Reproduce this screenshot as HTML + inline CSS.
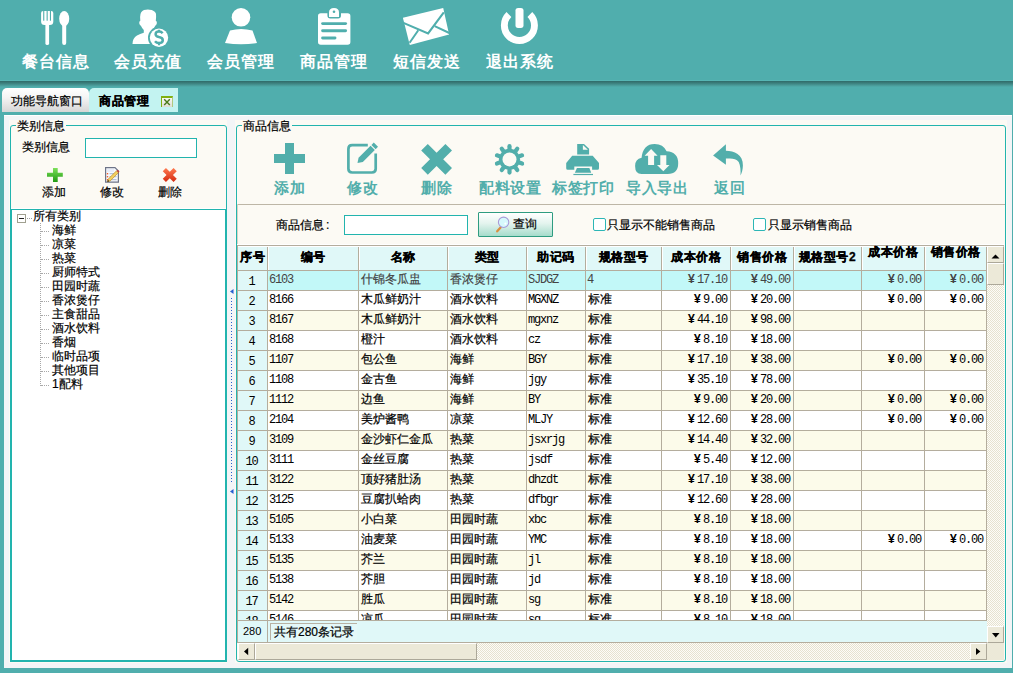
<!DOCTYPE html><html><head><meta charset="utf-8"><style>
*{margin:0;padding:0;box-sizing:border-box}
html,body{width:1013px;height:673px;overflow:hidden}
body{position:relative;background:#50aead;font-family:"Liberation Sans",sans-serif;font-size:12px;color:#000}
.a{position:absolute}
.t,.cell{-webkit-text-stroke:0.2px currentColor}
.nav,.tb,.mono,.num{-webkit-text-stroke:0}
.hd{-webkit-text-stroke:0.3px #000;z-index:2}
.t{position:absolute;white-space:nowrap;line-height:1}
.nav{color:#fff;font-size:16px;font-weight:bold;letter-spacing:1px}
.tb{color:#52aeab;font-size:15px;font-weight:bold;letter-spacing:0.6px}
.cell{position:absolute;white-space:nowrap;overflow:hidden;line-height:19px;height:19px}
.num{font-family:"Liberation Mono",monospace;font-size:12px;letter-spacing:-1.2px}
.mono{font-family:"Liberation Mono",monospace;font-size:12px;letter-spacing:-1.2px}
.yen{font-weight:bold;margin-right:2px;letter-spacing:0}
.hd{font-weight:bold;text-align:center;letter-spacing:0.5px}
.sbtn{position:absolute;background:#ece9d8;border-top:1px solid #fff;border-left:1px solid #fff;border-right:1px solid #aca899;border-bottom:1px solid #aca899}
.check{background-color:#fdfcf8;background-image:linear-gradient(45deg,#e6e2d0 25%,transparent 25%,transparent 75%,#e6e2d0 75%),linear-gradient(45deg,#e6e2d0 25%,transparent 25%,transparent 75%,#e6e2d0 75%);background-size:2px 2px;background-position:0 0,1px 1px}
</style></head><body>

<div class="a" style="left:0;top:80px;width:1013px;height:1px;background:#56b6b4"></div>
<div class="a" style="left:0;top:81px;width:1013px;height:6px;background:linear-gradient(#2f6a68,#3b7e7c 35%,#4a9c9a 75%,#50aead)"></div>
<div class="t nav" style="left:22px;top:54px">餐台信息</div>
<div class="t nav" style="left:114px;top:54px">会员充值</div>
<div class="t nav" style="left:207px;top:54px">会员管理</div>
<div class="t nav" style="left:300px;top:54px">商品管理</div>
<div class="t nav" style="left:393px;top:54px">短信发送</div>
<div class="t nav" style="left:486px;top:54px">退出系统</div>
<svg class="a" style="left:0;top:0" width="600" height="80">
<g fill="#fff">
 <path d="M41.1 13 q0 -2.1 2.1 -2.1 h8 q2.1 0 2.1 2.1 v8.5 q0 3.5 -3.5 3.5 h-5.2 q-3.5 0 -3.5 -3.5z"/>
 <rect x="45.4" y="23" width="3.7" height="22" rx="1.85"/>
 <ellipse cx="64.2" cy="18.7" rx="5" ry="7.6"/>
 <rect x="62.2" y="22" width="4" height="23" rx="2"/>
 <path d="M140.5 14 q1 -4 5.5 -4.2 q2 -0.5 3.5 0 q5 0.3 6.5 4 q0.3 3 -0.2 7 q1.5 0.5 1 2.8 q-0.5 2 -1.6 2.2 q-0.8 2.2 -2.8 4.2 v1.8 q2.2 0.8 4.5 1.8 l-3.8 10.3 h-20.6 q0 -6 4.5 -8.5 q3 -1.5 6.8 -2.6 v-2.8 q-2 -2 -2.9 -4.2 q-1.1 -0.2 -1.6 -2.2 q-0.5 -2.3 1 -2.8 q-0.5 -4 0.2 -6.8z"/>
 <circle cx="159" cy="37.7" r="11" fill="#50aead"/>
 <circle cx="159" cy="37.7" r="9.2"/>
</g>
<g fill="#50aead"><rect x="43.2" y="10" width="1.1" height="10.7"/><rect x="46.6" y="10" width="1.1" height="10.7"/><rect x="49.9" y="10" width="1.1" height="10.7"/></g>
<path d="M162.6 33.2 q-1.2 -1.6 -3.6 -1.6 q-3.4 0 -3.4 2.6 q0 2 3.4 2.8 q3.8 0.8 3.8 3.2 q0 2.8 -3.8 2.8 q-2.6 0 -4 -1.8" fill="none" stroke="#50aead" stroke-width="2.5"/>
<path d="M159 29.8 v2 M159 42.8 v2.4" stroke="#50aead" stroke-width="2.2"/>
<g fill="#fff">
 <circle cx="241" cy="17.3" r="9.3"/>
 <path d="M230 30.5 q11 -3 22.5 0 l4.5 12.5 q-16 2.5 -32 0z"/>
 <path d="M318 16 q0 -2.8 2.8 -2.8 h6.6 v2 q0 3.2 3 3.2 h7.6 q3 0 3 -3.2 v-2 h6.6 q2.8 0 2.8 2.8 v26 q0 2.8 -2.8 2.8 h-26.8 q-2.8 0 -2.8 -2.8z"/>
 <path d="M329 17.1 v-4.6 q0 -4.6 5 -4.6 q5 0 5 4.6 v4.6z"/>
</g>
<circle cx="334" cy="11.8" r="1.3" fill="#50aead"/>
<g stroke="#50aead" stroke-width="2.9" stroke-linecap="round">
 <path d="M322.6 23.6 h23"/><path d="M322.6 30.8 h23"/><path d="M322.6 38 h12.4"/>
</g>
<path d="M402.9 17.7 L443.2 7.9 L449.1 34.4 L409.8 44.9z" fill="#fff"/>
<path d="M403.4 22.9 L428.1 33.4 L443.8 12.4" fill="none" stroke="#50aead" stroke-width="2.1"/>
<path d="M409.6 42.8 L418.3 30.2 M434.7 26.2 L449.3 33" fill="none" stroke="#50aead" stroke-width="2"/>
<path d="M508.95 14.57 A15.05 15.05 0 1 0 529.85 14.57" fill="none" stroke="#fff" stroke-width="6.9"/>
<rect x="515.5" y="7.9" width="8" height="20" rx="2.6" fill="#fff"/>
</svg>
<div class="a" style="left:2px;top:88px;width:87px;height:24px;border-radius:5px 5px 0 0;background:linear-gradient(#ffffff,#f4f4f4 40%,#d6d6d6)"></div>
<div class="t" style="left:11px;top:95px;font-size:12px">功能导航窗口</div>
<div class="a" style="left:89px;top:88px;width:89px;height:24px;border-radius:5px 0 0 0;background:#c3f3f1"></div>
<div class="t" style="left:99px;top:95px;font-size:12px;font-weight:bold;letter-spacing:0.7px">商品管理</div>
<div class="a" style="left:161px;top:96px;width:12px;height:11px;border-top:2px solid #80b010;border-left:1px solid #80b010;border-right:1px solid #b0c880;background:linear-gradient(#f8f8f4,#dcdcd4)"></div>
<svg class="a" style="left:161px;top:96px" width="12" height="11"><path d="M3.2 3.2 L8.8 9 M8.8 3.2 L3.2 9" stroke="#4a7a1a" stroke-width="1.4"/></svg>
<div class="a" style="left:4px;top:115px;width:1008px;height:553px;background:#f3f5f7;border-top:1px solid #fff"></div>
<div class="a" style="left:9px;top:120px;width:218px;height:543px;background:#fcfaf4"></div>
<div class="a" style="left:10px;top:125px;width:217px;height:537px;border:1px solid #22b4ae;border-radius:3px"></div>
<div class="t" style="left:16px;top:120px;background:#fcfaf4;padding:0 1px">类别信息</div>
<div class="t" style="left:22px;top:141px">类别信息</div>
<div class="a" style="left:85px;top:138px;width:112px;height:20px;background:#fff;border:1px solid #22b4ae"></div>
<svg class="a" style="left:40px;top:164px" width="150" height="22">
<defs><linearGradient id="gp" x1="0" y1="0" x2="0" y2="1"><stop offset="0" stop-color="#7ee05a"/><stop offset="1" stop-color="#1f9a12"/></linearGradient>
<linearGradient id="rx" x1="0" y1="0" x2="0" y2="1"><stop offset="0" stop-color="#ff7a50"/><stop offset="1" stop-color="#d42a10"/></linearGradient></defs>
<path d="M13 4 h4.7 v4.7 h5.1 v4.1 h-5.1 v5.2 h-4.7 v-5.2 h-6 v-4.1 h6z" fill="url(#gp)"/>
<path d="M65.6 3.6 h9.4 l3.4 3.4 v11.2 h-12.8z" fill="#f6f8fc" stroke="#6e7488" stroke-width="1.2"/>
<rect x="67" y="5" width="7" height="3" fill="#e8ecf8"/>
<g fill="#f06030"><rect x="66.8" y="9" width="1.4" height="1.4"/><rect x="66.8" y="12" width="1.4" height="1.4"/><rect x="66.8" y="15" width="1.4" height="1.4"/></g>
<path d="M69.5 9.7 h6 M69.5 12.7 h7 M69.5 15.7 h7" stroke="#a8b6d0" stroke-width="1"/>
<path d="M67.4 17.8 L68.3 15 L76.5 6.8 L78.4 8.7 L70.2 16.9z" fill="#f4d060" stroke="#b08020" stroke-width="0.6"/>
<path d="M76.5 6.8 L77.6 5.7 L79.5 7.6 L78.4 8.7z" fill="#c04040"/>
<path d="M67.4 17.8 L68 16 L69.2 17.2z" fill="#000"/>
<path d="M122.75 7.2 L125.95 4 L129.75 7.8 L133.55 4 L136.75 7.2 L132.95 11 L136.75 14.8 L133.55 18 L129.75 14.2 L125.95 18 L122.75 14.8 L126.55 11z" fill="url(#rx)"/>
</svg>
<div class="t" style="left:42px;top:186px">添加</div>
<div class="t" style="left:100px;top:186px">修改</div>
<div class="t" style="left:158px;top:186px">删除</div>
<div class="a" style="left:10px;top:208px;width:217px;height:454px;background:#fff;border:1px solid #22b4ae;border-top:none"></div>
<div class="a" style="left:11px;top:209px;width:215px;height:452px;border:1px solid #22b4ae"></div>
<div class="a" style="left:17px;top:214px;width:9px;height:9px;border:1px solid #a0a090;background:#fff"></div>
<div class="a" style="left:19px;top:218px;width:5px;height:1px;background:#222"></div>
<div class="a" style="left:27px;top:218px;width:5px;height:1px;border-top:1px dotted #a0a0a0"></div>
<div class="t" style="left:33px;top:210px">所有类别</div>
<div class="a" style="left:40px;top:223px;width:1px;height:163px;border-left:1px dotted #a8a8a8"></div>
<div class="a" style="left:41px;top:231px;width:8px;height:1px;border-top:1px dotted #a8a8a8"></div>
<div class="t" style="left:52px;top:224px">海鲜</div>
<div class="a" style="left:41px;top:245px;width:8px;height:1px;border-top:1px dotted #a8a8a8"></div>
<div class="t" style="left:52px;top:238px">凉菜</div>
<div class="a" style="left:41px;top:259px;width:8px;height:1px;border-top:1px dotted #a8a8a8"></div>
<div class="t" style="left:52px;top:252px">热菜</div>
<div class="a" style="left:41px;top:273px;width:8px;height:1px;border-top:1px dotted #a8a8a8"></div>
<div class="t" style="left:52px;top:266px">厨师特式</div>
<div class="a" style="left:41px;top:287px;width:8px;height:1px;border-top:1px dotted #a8a8a8"></div>
<div class="t" style="left:52px;top:280px">田园时蔬</div>
<div class="a" style="left:41px;top:301px;width:8px;height:1px;border-top:1px dotted #a8a8a8"></div>
<div class="t" style="left:52px;top:294px">香浓煲仔</div>
<div class="a" style="left:41px;top:315px;width:8px;height:1px;border-top:1px dotted #a8a8a8"></div>
<div class="t" style="left:52px;top:308px">主食甜品</div>
<div class="a" style="left:41px;top:329px;width:8px;height:1px;border-top:1px dotted #a8a8a8"></div>
<div class="t" style="left:52px;top:322px">酒水饮料</div>
<div class="a" style="left:41px;top:343px;width:8px;height:1px;border-top:1px dotted #a8a8a8"></div>
<div class="t" style="left:52px;top:336px">香烟</div>
<div class="a" style="left:41px;top:357px;width:8px;height:1px;border-top:1px dotted #a8a8a8"></div>
<div class="t" style="left:52px;top:350px">临时品项</div>
<div class="a" style="left:41px;top:371px;width:8px;height:1px;border-top:1px dotted #a8a8a8"></div>
<div class="t" style="left:52px;top:364px">其他项目</div>
<div class="a" style="left:41px;top:385px;width:8px;height:1px;border-top:1px dotted #a8a8a8"></div>
<div class="t" style="left:52px;top:378px">1配料</div>
<svg class="a" style="left:228px;top:285px" width="8" height="215">
<path d="M2 6.5 L5.5 4 L5.5 9z" fill="#2a5fd0"/>
<path d="M2 206.5 L5.5 204 L5.5 209z" fill="#2a5fd0"/>
</svg>
<div class="a" style="left:231px;top:298px;width:1px;height:185px;background-image:linear-gradient(#2a5fd0 34%,transparent 34%);background-size:1px 3px"></div>
<div class="a" style="left:235px;top:120px;width:772px;height:543px;background:#fcfaf4"></div>
<div class="a" style="left:236px;top:125px;width:770px;height:537px;border:1px solid #22b4ae;border-radius:3px"></div>
<div class="t" style="left:242px;top:120px;background:#fcfaf4;padding:0 1px">商品信息</div>
<svg class="a" style="left:0;top:0;pointer-events:none" width="1013" height="673">
<g fill="#52aeab">
 <rect x="274" y="154" width="31" height="9"/><rect x="285" y="143" width="9" height="31"/>
</g>
<path d="M367.8 145.2 H352.2 q-3.8 0 -3.8 3.8 V168.7 q0 3.8 3.8 3.8 H371.9 q3.8 0 3.8 -3.8 V153.4" fill="none" stroke="#52aeab" stroke-width="2.7"/>
<path d="M357.5 163.1 L358.56 157.8 L370.58 145.78 L374.82 150.02 L362.8 162.04z" fill="#52aeab"/>
<path d="M371.43 144.93 L373.76 142.6 L378 146.84 L375.67 149.17z" fill="#52aeab"/>
<path d="M421.2 150.5 L427.8 143.9 L436.6 152.7 L445.4 143.9 L452 150.5 L443.2 159.3 L452 168.1 L445.4 174.7 L436.6 165.9 L427.8 174.7 L421.2 168.1 L430 159.3z" fill="#52aeab"/>
<g transform="translate(509.5,159.4)" fill="#52aeab"><rect x="-2.1" y="-15.3" width="4.2" height="7" rx="2.1" transform="rotate(0)"/><rect x="-2.1" y="-15.3" width="4.2" height="7" rx="2.1" transform="rotate(36)"/><rect x="-2.1" y="-15.3" width="4.2" height="7" rx="2.1" transform="rotate(72)"/><rect x="-2.1" y="-15.3" width="4.2" height="7" rx="2.1" transform="rotate(108)"/><rect x="-2.1" y="-15.3" width="4.2" height="7" rx="2.1" transform="rotate(144)"/><rect x="-2.1" y="-15.3" width="4.2" height="7" rx="2.1" transform="rotate(180)"/><rect x="-2.1" y="-15.3" width="4.2" height="7" rx="2.1" transform="rotate(216)"/><rect x="-2.1" y="-15.3" width="4.2" height="7" rx="2.1" transform="rotate(252)"/><rect x="-2.1" y="-15.3" width="4.2" height="7" rx="2.1" transform="rotate(288)"/><rect x="-2.1" y="-15.3" width="4.2" height="7" rx="2.1" transform="rotate(324)"/><circle r="10.6"/><circle r="7" fill="#fcfaf4"/></g>
<g transform="translate(560,140)">
<path d="M17.2 3.9 h6.8 l5.1 4.9 v5.8 h-11.9z" fill="#52aeab"/>
<path d="M22.9 5 v4.8 h5z" fill="#fcfaf4"/>
<path d="M12.2 15.8 h20.5 l6.3 7.1 v5.3 q0 1.5 -1.5 1.5 h-5.4 v-3.2 h-17.8 v3.2 h-6.6 q-1.5 0 -1.5 -1.5 v-5.3z" fill="#52aeab"/>
<path d="M16.9 27.9 h12.5 l1.8 4.8 h-16.3z" fill="#52aeab"/>
<rect x="13.4" y="33.9" width="19.6" height="1.2" fill="#52aeab"/>
</g>
<g transform="translate(630,140)">
<path d="M11.5 33.9 q-6.4 0 -6.4 -8 q0 -7 6.5 -8.2 q1.3 -13.8 13.1 -13.8 q8.5 0 11.9 7.3 q11.6 0.8 11.6 12 q0 10.7 -10.5 10.7z" fill="#52aeab"/>
<path d="M21.1 8.9 L14.6 15.8 h3.5 v9.2 h6 v-9.2 h3.5z" fill="#fcfaf4"/>
<path d="M33.3 31.2 L27 25 h3.3 v-9.8 h6 v9.8 h3.2z" fill="#fcfaf4"/>
</g>
<g transform="translate(705,138)">
<path d="M8.1 17.4 L20.9 6.2 V12.8 C29 12.8 38.2 16.5 37.9 27.5 C37.8 32 36.8 35 35.5 37.5 C35.8 33 35.5 27.5 33.7 24 C31 20 26 20.2 20.9 20.6 V26.8 Z" fill="#52aeab"/>
</g>
</svg>
<div class="t tb" style="left:274px;top:180px">添加</div>
<div class="t tb" style="left:347px;top:180px">修改</div>
<div class="t tb" style="left:421px;top:180px">删除</div>
<div class="t tb" style="left:479px;top:180px">配料设置</div>
<div class="t tb" style="left:552px;top:180px">标签打印</div>
<div class="t tb" style="left:626px;top:180px">导入导出</div>
<div class="t tb" style="left:714px;top:180px">返回</div>
<div class="a" style="left:237px;top:204px;width:768px;height:1px;background:#bdb6a6"></div>
<div class="a" style="left:237px;top:204px;width:1px;height:42px;background:#d8d2c4"></div>
<div class="t" style="left:276px;top:219px">商品信息</div>
<div class="t" style="left:326px;top:219px">:</div>
<div class="a" style="left:344px;top:215px;width:124px;height:20px;background:#fff;border:1px solid #22b4ae"></div>
<div class="a" style="left:478px;top:212px;width:75px;height:25px;border:1px solid #2e9c80;border-radius:1px;background:linear-gradient(#ffffff,#e4f4ee 45%,#a6dccb)"></div>
<svg class="a" style="left:494px;top:215px" width="18" height="18">
<path d="M3.2 16.3 L6.8 12.3" stroke="#d89040" stroke-width="2.3" stroke-linecap="round"/>
<circle cx="9.6" cy="7.3" r="5.2" fill="#d6f8fc" stroke="#a89ad8" stroke-width="1.1"/>
<circle cx="11.4" cy="8.6" r="1.1" fill="#fff"/>
</svg>
<div class="t" style="left:513px;top:218px">查询</div>
<div class="a" style="left:593px;top:218px;width:13px;height:13px;border:1.5px solid #2cb6b6;border-radius:2px;background:#fff"></div>
<div class="t" style="left:607px;top:219px">只显示不能销售商品</div>
<div class="a" style="left:753px;top:218px;width:13px;height:13px;border:1.5px solid #2cb6b6;border-radius:2px;background:#fff"></div>
<div class="t" style="left:768px;top:219px">只显示销售商品</div>
<div class="a" style="left:237px;top:244px;width:768px;height:1px;background:#fff"></div>
<div class="a" style="left:237px;top:245px;width:750px;height:1px;background:#b4ad9d"></div>
<div class="a" style="left:237px;top:245px;width:1px;height:397px;background:#b4ad9d"></div>
<div class="a" style="left:238px;top:246px;width:748px;height:24px;background:#e0f8f8"></div>
<div class="t hd" style="left:238px;top:251px;width:29px">序号</div>
<div class="t hd" style="left:268px;top:251px;width:90px">编号</div>
<div class="t hd" style="left:359px;top:251px;width:88px">名称</div>
<div class="t hd" style="left:448px;top:251px;width:78px">类型</div>
<div class="t hd" style="left:527px;top:251px;width:58px">助记码</div>
<div class="t hd" style="left:586px;top:251px;width:75px">规格型号</div>
<div class="t hd" style="left:662px;top:251px;width:68px">成本价格</div>
<div class="t hd" style="left:731px;top:251px;width:62px">销售价格</div>
<div class="t hd" style="left:794px;top:251px;width:67px">规格型号2</div>
<div class="t hd" style="left:862px;top:246px;width:62px">成本价格</div>
<div class="t hd" style="left:925px;top:246px;width:61px">销售价格</div>
<div class="a" style="left:237px;top:270px;width:750px;height:351px;overflow:hidden">
<div class="a" style="left:0;top:0px;width:750px;height:1px;background:#b4ad9d"></div>
<div class="a" style="left:1px;top:1px;width:29px;height:19px;background:#e0f8f8"></div>
<div class="a" style="left:31px;top:1px;width:718px;height:19px;background:#c2f8f8"></div>
<div class="cell num" style="left:0px;top:3px;width:29px;text-align:center;color:#000">1</div>
<div class="cell num" style="left:31px;top:1px;width:90px;color:#444;padding-left:1px">6103</div>
<div class="cell" style="left:122px;top:1px;width:88px;color:#444;padding-left:2px;margin-top:-1px">什锦冬瓜盅</div>
<div class="cell" style="left:211px;top:1px;width:78px;color:#444;padding-left:2px;margin-top:-1px">香浓煲仔</div>
<div class="cell mono" style="left:290px;top:1px;width:58px;color:#444;padding-left:1px">SJDGZ</div>
<div class="cell mono" style="left:349px;top:1px;width:75px;color:#444;padding-left:1px">4</div>
<div class="cell mono" style="left:425px;top:1px;width:68px;color:#444;text-align:right;padding-right:3px"><span class="yen">¥</span>17.10</div>
<div class="cell mono" style="left:494px;top:1px;width:62px;color:#444;text-align:right;padding-right:3px"><span class="yen">¥</span>49.00</div>
<div class="cell mono" style="left:625px;top:1px;width:62px;color:#444;text-align:right;padding-right:3px"><span class="yen">¥</span>0.00</div>
<div class="cell mono" style="left:688px;top:1px;width:61px;color:#444;text-align:right;padding-right:3px"><span class="yen">¥</span>0.00</div>
<div class="a" style="left:0;top:20px;width:750px;height:1px;background:#b4ad9d"></div>
<div class="a" style="left:1px;top:21px;width:29px;height:19px;background:#e0f8f8"></div>
<div class="a" style="left:31px;top:21px;width:718px;height:19px;background:#ffffff"></div>
<div class="cell num" style="left:0px;top:23px;width:29px;text-align:center;color:#000">2</div>
<div class="cell num" style="left:31px;top:21px;width:90px;color:#000;padding-left:1px">8166</div>
<div class="cell" style="left:122px;top:21px;width:88px;color:#000;padding-left:2px;margin-top:-1px">木瓜鲜奶汁</div>
<div class="cell" style="left:211px;top:21px;width:78px;color:#000;padding-left:2px;margin-top:-1px">酒水饮料</div>
<div class="cell mono" style="left:290px;top:21px;width:58px;color:#000;padding-left:1px">MGXNZ</div>
<div class="cell" style="left:349px;top:21px;width:75px;color:#000;padding-left:2px;margin-top:-1px">标准</div>
<div class="cell mono" style="left:425px;top:21px;width:68px;color:#000;text-align:right;padding-right:3px"><span class="yen">¥</span>9.00</div>
<div class="cell mono" style="left:494px;top:21px;width:62px;color:#000;text-align:right;padding-right:3px"><span class="yen">¥</span>20.00</div>
<div class="cell mono" style="left:625px;top:21px;width:62px;color:#000;text-align:right;padding-right:3px"><span class="yen">¥</span>0.00</div>
<div class="cell mono" style="left:688px;top:21px;width:61px;color:#000;text-align:right;padding-right:3px"><span class="yen">¥</span>0.00</div>
<div class="a" style="left:0;top:40px;width:750px;height:1px;background:#b4ad9d"></div>
<div class="a" style="left:1px;top:41px;width:29px;height:19px;background:#e0f8f8"></div>
<div class="a" style="left:31px;top:41px;width:718px;height:19px;background:#fcfbea"></div>
<div class="cell num" style="left:0px;top:43px;width:29px;text-align:center;color:#000">3</div>
<div class="cell num" style="left:31px;top:41px;width:90px;color:#000;padding-left:1px">8167</div>
<div class="cell" style="left:122px;top:41px;width:88px;color:#000;padding-left:2px;margin-top:-1px">木瓜鲜奶汁</div>
<div class="cell" style="left:211px;top:41px;width:78px;color:#000;padding-left:2px;margin-top:-1px">酒水饮料</div>
<div class="cell mono" style="left:290px;top:41px;width:58px;color:#000;padding-left:1px">mgxnz</div>
<div class="cell" style="left:349px;top:41px;width:75px;color:#000;padding-left:2px;margin-top:-1px">标准</div>
<div class="cell mono" style="left:425px;top:41px;width:68px;color:#000;text-align:right;padding-right:3px"><span class="yen">¥</span>44.10</div>
<div class="cell mono" style="left:494px;top:41px;width:62px;color:#000;text-align:right;padding-right:3px"><span class="yen">¥</span>98.00</div>
<div class="a" style="left:0;top:60px;width:750px;height:1px;background:#b4ad9d"></div>
<div class="a" style="left:1px;top:61px;width:29px;height:19px;background:#e0f8f8"></div>
<div class="a" style="left:31px;top:61px;width:718px;height:19px;background:#ffffff"></div>
<div class="cell num" style="left:0px;top:63px;width:29px;text-align:center;color:#000">4</div>
<div class="cell num" style="left:31px;top:61px;width:90px;color:#000;padding-left:1px">8168</div>
<div class="cell" style="left:122px;top:61px;width:88px;color:#000;padding-left:2px;margin-top:-1px">橙汁</div>
<div class="cell" style="left:211px;top:61px;width:78px;color:#000;padding-left:2px;margin-top:-1px">酒水饮料</div>
<div class="cell mono" style="left:290px;top:61px;width:58px;color:#000;padding-left:1px">cz</div>
<div class="cell" style="left:349px;top:61px;width:75px;color:#000;padding-left:2px;margin-top:-1px">标准</div>
<div class="cell mono" style="left:425px;top:61px;width:68px;color:#000;text-align:right;padding-right:3px"><span class="yen">¥</span>8.10</div>
<div class="cell mono" style="left:494px;top:61px;width:62px;color:#000;text-align:right;padding-right:3px"><span class="yen">¥</span>18.00</div>
<div class="a" style="left:0;top:80px;width:750px;height:1px;background:#b4ad9d"></div>
<div class="a" style="left:1px;top:81px;width:29px;height:19px;background:#e0f8f8"></div>
<div class="a" style="left:31px;top:81px;width:718px;height:19px;background:#fcfbea"></div>
<div class="cell num" style="left:0px;top:83px;width:29px;text-align:center;color:#000">5</div>
<div class="cell num" style="left:31px;top:81px;width:90px;color:#000;padding-left:1px">1107</div>
<div class="cell" style="left:122px;top:81px;width:88px;color:#000;padding-left:2px;margin-top:-1px">包公鱼</div>
<div class="cell" style="left:211px;top:81px;width:78px;color:#000;padding-left:2px;margin-top:-1px">海鲜</div>
<div class="cell mono" style="left:290px;top:81px;width:58px;color:#000;padding-left:1px">BGY</div>
<div class="cell" style="left:349px;top:81px;width:75px;color:#000;padding-left:2px;margin-top:-1px">标准</div>
<div class="cell mono" style="left:425px;top:81px;width:68px;color:#000;text-align:right;padding-right:3px"><span class="yen">¥</span>17.10</div>
<div class="cell mono" style="left:494px;top:81px;width:62px;color:#000;text-align:right;padding-right:3px"><span class="yen">¥</span>38.00</div>
<div class="cell mono" style="left:625px;top:81px;width:62px;color:#000;text-align:right;padding-right:3px"><span class="yen">¥</span>0.00</div>
<div class="cell mono" style="left:688px;top:81px;width:61px;color:#000;text-align:right;padding-right:3px"><span class="yen">¥</span>0.00</div>
<div class="a" style="left:0;top:100px;width:750px;height:1px;background:#b4ad9d"></div>
<div class="a" style="left:1px;top:101px;width:29px;height:19px;background:#e0f8f8"></div>
<div class="a" style="left:31px;top:101px;width:718px;height:19px;background:#ffffff"></div>
<div class="cell num" style="left:0px;top:103px;width:29px;text-align:center;color:#000">6</div>
<div class="cell num" style="left:31px;top:101px;width:90px;color:#000;padding-left:1px">1108</div>
<div class="cell" style="left:122px;top:101px;width:88px;color:#000;padding-left:2px;margin-top:-1px">金古鱼</div>
<div class="cell" style="left:211px;top:101px;width:78px;color:#000;padding-left:2px;margin-top:-1px">海鲜</div>
<div class="cell mono" style="left:290px;top:101px;width:58px;color:#000;padding-left:1px">jgy</div>
<div class="cell" style="left:349px;top:101px;width:75px;color:#000;padding-left:2px;margin-top:-1px">标准</div>
<div class="cell mono" style="left:425px;top:101px;width:68px;color:#000;text-align:right;padding-right:3px"><span class="yen">¥</span>35.10</div>
<div class="cell mono" style="left:494px;top:101px;width:62px;color:#000;text-align:right;padding-right:3px"><span class="yen">¥</span>78.00</div>
<div class="a" style="left:0;top:120px;width:750px;height:1px;background:#b4ad9d"></div>
<div class="a" style="left:1px;top:121px;width:29px;height:19px;background:#e0f8f8"></div>
<div class="a" style="left:31px;top:121px;width:718px;height:19px;background:#fcfbea"></div>
<div class="cell num" style="left:0px;top:123px;width:29px;text-align:center;color:#000">7</div>
<div class="cell num" style="left:31px;top:121px;width:90px;color:#000;padding-left:1px">1112</div>
<div class="cell" style="left:122px;top:121px;width:88px;color:#000;padding-left:2px;margin-top:-1px">边鱼</div>
<div class="cell" style="left:211px;top:121px;width:78px;color:#000;padding-left:2px;margin-top:-1px">海鲜</div>
<div class="cell mono" style="left:290px;top:121px;width:58px;color:#000;padding-left:1px">BY</div>
<div class="cell" style="left:349px;top:121px;width:75px;color:#000;padding-left:2px;margin-top:-1px">标准</div>
<div class="cell mono" style="left:425px;top:121px;width:68px;color:#000;text-align:right;padding-right:3px"><span class="yen">¥</span>9.00</div>
<div class="cell mono" style="left:494px;top:121px;width:62px;color:#000;text-align:right;padding-right:3px"><span class="yen">¥</span>20.00</div>
<div class="cell mono" style="left:625px;top:121px;width:62px;color:#000;text-align:right;padding-right:3px"><span class="yen">¥</span>0.00</div>
<div class="cell mono" style="left:688px;top:121px;width:61px;color:#000;text-align:right;padding-right:3px"><span class="yen">¥</span>0.00</div>
<div class="a" style="left:0;top:140px;width:750px;height:1px;background:#b4ad9d"></div>
<div class="a" style="left:1px;top:141px;width:29px;height:19px;background:#e0f8f8"></div>
<div class="a" style="left:31px;top:141px;width:718px;height:19px;background:#ffffff"></div>
<div class="cell num" style="left:0px;top:143px;width:29px;text-align:center;color:#000">8</div>
<div class="cell num" style="left:31px;top:141px;width:90px;color:#000;padding-left:1px">2104</div>
<div class="cell" style="left:122px;top:141px;width:88px;color:#000;padding-left:2px;margin-top:-1px">美炉酱鸭</div>
<div class="cell" style="left:211px;top:141px;width:78px;color:#000;padding-left:2px;margin-top:-1px">凉菜</div>
<div class="cell mono" style="left:290px;top:141px;width:58px;color:#000;padding-left:1px">MLJY</div>
<div class="cell" style="left:349px;top:141px;width:75px;color:#000;padding-left:2px;margin-top:-1px">标准</div>
<div class="cell mono" style="left:425px;top:141px;width:68px;color:#000;text-align:right;padding-right:3px"><span class="yen">¥</span>12.60</div>
<div class="cell mono" style="left:494px;top:141px;width:62px;color:#000;text-align:right;padding-right:3px"><span class="yen">¥</span>28.00</div>
<div class="cell mono" style="left:625px;top:141px;width:62px;color:#000;text-align:right;padding-right:3px"><span class="yen">¥</span>0.00</div>
<div class="cell mono" style="left:688px;top:141px;width:61px;color:#000;text-align:right;padding-right:3px"><span class="yen">¥</span>0.00</div>
<div class="a" style="left:0;top:160px;width:750px;height:1px;background:#b4ad9d"></div>
<div class="a" style="left:1px;top:161px;width:29px;height:19px;background:#e0f8f8"></div>
<div class="a" style="left:31px;top:161px;width:718px;height:19px;background:#fcfbea"></div>
<div class="cell num" style="left:0px;top:163px;width:29px;text-align:center;color:#000">9</div>
<div class="cell num" style="left:31px;top:161px;width:90px;color:#000;padding-left:1px">3109</div>
<div class="cell" style="left:122px;top:161px;width:88px;color:#000;padding-left:2px;margin-top:-1px">金沙虾仁金瓜</div>
<div class="cell" style="left:211px;top:161px;width:78px;color:#000;padding-left:2px;margin-top:-1px">热菜</div>
<div class="cell mono" style="left:290px;top:161px;width:58px;color:#000;padding-left:1px">jsxrjg</div>
<div class="cell" style="left:349px;top:161px;width:75px;color:#000;padding-left:2px;margin-top:-1px">标准</div>
<div class="cell mono" style="left:425px;top:161px;width:68px;color:#000;text-align:right;padding-right:3px"><span class="yen">¥</span>14.40</div>
<div class="cell mono" style="left:494px;top:161px;width:62px;color:#000;text-align:right;padding-right:3px"><span class="yen">¥</span>32.00</div>
<div class="a" style="left:0;top:180px;width:750px;height:1px;background:#b4ad9d"></div>
<div class="a" style="left:1px;top:181px;width:29px;height:19px;background:#e0f8f8"></div>
<div class="a" style="left:31px;top:181px;width:718px;height:19px;background:#ffffff"></div>
<div class="cell num" style="left:0px;top:183px;width:29px;text-align:center;color:#000">10</div>
<div class="cell num" style="left:31px;top:181px;width:90px;color:#000;padding-left:1px">3111</div>
<div class="cell" style="left:122px;top:181px;width:88px;color:#000;padding-left:2px;margin-top:-1px">金丝豆腐</div>
<div class="cell" style="left:211px;top:181px;width:78px;color:#000;padding-left:2px;margin-top:-1px">热菜</div>
<div class="cell mono" style="left:290px;top:181px;width:58px;color:#000;padding-left:1px">jsdf</div>
<div class="cell" style="left:349px;top:181px;width:75px;color:#000;padding-left:2px;margin-top:-1px">标准</div>
<div class="cell mono" style="left:425px;top:181px;width:68px;color:#000;text-align:right;padding-right:3px"><span class="yen">¥</span>5.40</div>
<div class="cell mono" style="left:494px;top:181px;width:62px;color:#000;text-align:right;padding-right:3px"><span class="yen">¥</span>12.00</div>
<div class="a" style="left:0;top:200px;width:750px;height:1px;background:#b4ad9d"></div>
<div class="a" style="left:1px;top:201px;width:29px;height:19px;background:#e0f8f8"></div>
<div class="a" style="left:31px;top:201px;width:718px;height:19px;background:#fcfbea"></div>
<div class="cell num" style="left:0px;top:203px;width:29px;text-align:center;color:#000">11</div>
<div class="cell num" style="left:31px;top:201px;width:90px;color:#000;padding-left:1px">3122</div>
<div class="cell" style="left:122px;top:201px;width:88px;color:#000;padding-left:2px;margin-top:-1px">顶好猪肚汤</div>
<div class="cell" style="left:211px;top:201px;width:78px;color:#000;padding-left:2px;margin-top:-1px">热菜</div>
<div class="cell mono" style="left:290px;top:201px;width:58px;color:#000;padding-left:1px">dhzdt</div>
<div class="cell" style="left:349px;top:201px;width:75px;color:#000;padding-left:2px;margin-top:-1px">标准</div>
<div class="cell mono" style="left:425px;top:201px;width:68px;color:#000;text-align:right;padding-right:3px"><span class="yen">¥</span>17.10</div>
<div class="cell mono" style="left:494px;top:201px;width:62px;color:#000;text-align:right;padding-right:3px"><span class="yen">¥</span>38.00</div>
<div class="a" style="left:0;top:220px;width:750px;height:1px;background:#b4ad9d"></div>
<div class="a" style="left:1px;top:221px;width:29px;height:19px;background:#e0f8f8"></div>
<div class="a" style="left:31px;top:221px;width:718px;height:19px;background:#ffffff"></div>
<div class="cell num" style="left:0px;top:223px;width:29px;text-align:center;color:#000">12</div>
<div class="cell num" style="left:31px;top:221px;width:90px;color:#000;padding-left:1px">3125</div>
<div class="cell" style="left:122px;top:221px;width:88px;color:#000;padding-left:2px;margin-top:-1px">豆腐扒蛤肉</div>
<div class="cell" style="left:211px;top:221px;width:78px;color:#000;padding-left:2px;margin-top:-1px">热菜</div>
<div class="cell mono" style="left:290px;top:221px;width:58px;color:#000;padding-left:1px">dfbgr</div>
<div class="cell" style="left:349px;top:221px;width:75px;color:#000;padding-left:2px;margin-top:-1px">标准</div>
<div class="cell mono" style="left:425px;top:221px;width:68px;color:#000;text-align:right;padding-right:3px"><span class="yen">¥</span>12.60</div>
<div class="cell mono" style="left:494px;top:221px;width:62px;color:#000;text-align:right;padding-right:3px"><span class="yen">¥</span>28.00</div>
<div class="a" style="left:0;top:240px;width:750px;height:1px;background:#b4ad9d"></div>
<div class="a" style="left:1px;top:241px;width:29px;height:19px;background:#e0f8f8"></div>
<div class="a" style="left:31px;top:241px;width:718px;height:19px;background:#fcfbea"></div>
<div class="cell num" style="left:0px;top:243px;width:29px;text-align:center;color:#000">13</div>
<div class="cell num" style="left:31px;top:241px;width:90px;color:#000;padding-left:1px">5105</div>
<div class="cell" style="left:122px;top:241px;width:88px;color:#000;padding-left:2px;margin-top:-1px">小白菜</div>
<div class="cell" style="left:211px;top:241px;width:78px;color:#000;padding-left:2px;margin-top:-1px">田园时蔬</div>
<div class="cell mono" style="left:290px;top:241px;width:58px;color:#000;padding-left:1px">xbc</div>
<div class="cell" style="left:349px;top:241px;width:75px;color:#000;padding-left:2px;margin-top:-1px">标准</div>
<div class="cell mono" style="left:425px;top:241px;width:68px;color:#000;text-align:right;padding-right:3px"><span class="yen">¥</span>8.10</div>
<div class="cell mono" style="left:494px;top:241px;width:62px;color:#000;text-align:right;padding-right:3px"><span class="yen">¥</span>18.00</div>
<div class="a" style="left:0;top:260px;width:750px;height:1px;background:#b4ad9d"></div>
<div class="a" style="left:1px;top:261px;width:29px;height:19px;background:#e0f8f8"></div>
<div class="a" style="left:31px;top:261px;width:718px;height:19px;background:#ffffff"></div>
<div class="cell num" style="left:0px;top:263px;width:29px;text-align:center;color:#000">14</div>
<div class="cell num" style="left:31px;top:261px;width:90px;color:#000;padding-left:1px">5133</div>
<div class="cell" style="left:122px;top:261px;width:88px;color:#000;padding-left:2px;margin-top:-1px">油麦菜</div>
<div class="cell" style="left:211px;top:261px;width:78px;color:#000;padding-left:2px;margin-top:-1px">田园时蔬</div>
<div class="cell mono" style="left:290px;top:261px;width:58px;color:#000;padding-left:1px">YMC</div>
<div class="cell" style="left:349px;top:261px;width:75px;color:#000;padding-left:2px;margin-top:-1px">标准</div>
<div class="cell mono" style="left:425px;top:261px;width:68px;color:#000;text-align:right;padding-right:3px"><span class="yen">¥</span>8.10</div>
<div class="cell mono" style="left:494px;top:261px;width:62px;color:#000;text-align:right;padding-right:3px"><span class="yen">¥</span>18.00</div>
<div class="cell mono" style="left:625px;top:261px;width:62px;color:#000;text-align:right;padding-right:3px"><span class="yen">¥</span>0.00</div>
<div class="cell mono" style="left:688px;top:261px;width:61px;color:#000;text-align:right;padding-right:3px"><span class="yen">¥</span>0.00</div>
<div class="a" style="left:0;top:280px;width:750px;height:1px;background:#b4ad9d"></div>
<div class="a" style="left:1px;top:281px;width:29px;height:19px;background:#e0f8f8"></div>
<div class="a" style="left:31px;top:281px;width:718px;height:19px;background:#fcfbea"></div>
<div class="cell num" style="left:0px;top:283px;width:29px;text-align:center;color:#000">15</div>
<div class="cell num" style="left:31px;top:281px;width:90px;color:#000;padding-left:1px">5135</div>
<div class="cell" style="left:122px;top:281px;width:88px;color:#000;padding-left:2px;margin-top:-1px">芥兰</div>
<div class="cell" style="left:211px;top:281px;width:78px;color:#000;padding-left:2px;margin-top:-1px">田园时蔬</div>
<div class="cell mono" style="left:290px;top:281px;width:58px;color:#000;padding-left:1px">jl</div>
<div class="cell" style="left:349px;top:281px;width:75px;color:#000;padding-left:2px;margin-top:-1px">标准</div>
<div class="cell mono" style="left:425px;top:281px;width:68px;color:#000;text-align:right;padding-right:3px"><span class="yen">¥</span>8.10</div>
<div class="cell mono" style="left:494px;top:281px;width:62px;color:#000;text-align:right;padding-right:3px"><span class="yen">¥</span>18.00</div>
<div class="a" style="left:0;top:300px;width:750px;height:1px;background:#b4ad9d"></div>
<div class="a" style="left:1px;top:301px;width:29px;height:19px;background:#e0f8f8"></div>
<div class="a" style="left:31px;top:301px;width:718px;height:19px;background:#ffffff"></div>
<div class="cell num" style="left:0px;top:303px;width:29px;text-align:center;color:#000">16</div>
<div class="cell num" style="left:31px;top:301px;width:90px;color:#000;padding-left:1px">5138</div>
<div class="cell" style="left:122px;top:301px;width:88px;color:#000;padding-left:2px;margin-top:-1px">芥胆</div>
<div class="cell" style="left:211px;top:301px;width:78px;color:#000;padding-left:2px;margin-top:-1px">田园时蔬</div>
<div class="cell mono" style="left:290px;top:301px;width:58px;color:#000;padding-left:1px">jd</div>
<div class="cell" style="left:349px;top:301px;width:75px;color:#000;padding-left:2px;margin-top:-1px">标准</div>
<div class="cell mono" style="left:425px;top:301px;width:68px;color:#000;text-align:right;padding-right:3px"><span class="yen">¥</span>8.10</div>
<div class="cell mono" style="left:494px;top:301px;width:62px;color:#000;text-align:right;padding-right:3px"><span class="yen">¥</span>18.00</div>
<div class="a" style="left:0;top:320px;width:750px;height:1px;background:#b4ad9d"></div>
<div class="a" style="left:1px;top:321px;width:29px;height:19px;background:#e0f8f8"></div>
<div class="a" style="left:31px;top:321px;width:718px;height:19px;background:#fcfbea"></div>
<div class="cell num" style="left:0px;top:323px;width:29px;text-align:center;color:#000">17</div>
<div class="cell num" style="left:31px;top:321px;width:90px;color:#000;padding-left:1px">5142</div>
<div class="cell" style="left:122px;top:321px;width:88px;color:#000;padding-left:2px;margin-top:-1px">胜瓜</div>
<div class="cell" style="left:211px;top:321px;width:78px;color:#000;padding-left:2px;margin-top:-1px">田园时蔬</div>
<div class="cell mono" style="left:290px;top:321px;width:58px;color:#000;padding-left:1px">sg</div>
<div class="cell" style="left:349px;top:321px;width:75px;color:#000;padding-left:2px;margin-top:-1px">标准</div>
<div class="cell mono" style="left:425px;top:321px;width:68px;color:#000;text-align:right;padding-right:3px"><span class="yen">¥</span>8.10</div>
<div class="cell mono" style="left:494px;top:321px;width:62px;color:#000;text-align:right;padding-right:3px"><span class="yen">¥</span>18.00</div>
<div class="a" style="left:0;top:340px;width:750px;height:1px;background:#b4ad9d"></div>
<div class="a" style="left:1px;top:341px;width:29px;height:19px;background:#e0f8f8"></div>
<div class="a" style="left:31px;top:341px;width:718px;height:19px;background:#ffffff"></div>
<div class="cell num" style="left:0px;top:343px;width:29px;text-align:center;color:#000">18</div>
<div class="cell num" style="left:31px;top:341px;width:90px;color:#000;padding-left:1px">5146</div>
<div class="cell" style="left:122px;top:341px;width:88px;color:#000;padding-left:2px;margin-top:-1px">凉瓜</div>
<div class="cell" style="left:211px;top:341px;width:78px;color:#000;padding-left:2px;margin-top:-1px">田园时蔬</div>
<div class="cell mono" style="left:290px;top:341px;width:58px;color:#000;padding-left:1px">sg</div>
<div class="cell" style="left:349px;top:341px;width:75px;color:#000;padding-left:2px;margin-top:-1px">标准</div>
<div class="cell mono" style="left:425px;top:341px;width:68px;color:#000;text-align:right;padding-right:3px"><span class="yen">¥</span>8.10</div>
<div class="cell mono" style="left:494px;top:341px;width:62px;color:#000;text-align:right;padding-right:3px"><span class="yen">¥</span>18.00</div>
<div class="a" style="left:30px;top:0;width:1px;height:351px;background:#b4ad9d"></div>
<div class="a" style="left:121px;top:0;width:1px;height:351px;background:#b4ad9d"></div>
<div class="a" style="left:210px;top:0;width:1px;height:351px;background:#b4ad9d"></div>
<div class="a" style="left:289px;top:0;width:1px;height:351px;background:#b4ad9d"></div>
<div class="a" style="left:348px;top:0;width:1px;height:351px;background:#b4ad9d"></div>
<div class="a" style="left:424px;top:0;width:1px;height:351px;background:#b4ad9d"></div>
<div class="a" style="left:493px;top:0;width:1px;height:351px;background:#b4ad9d"></div>
<div class="a" style="left:556px;top:0;width:1px;height:351px;background:#b4ad9d"></div>
<div class="a" style="left:624px;top:0;width:1px;height:351px;background:#b4ad9d"></div>
<div class="a" style="left:687px;top:0;width:1px;height:351px;background:#b4ad9d"></div>
<div class="a" style="left:749px;top:0;width:1px;height:351px;background:#b4ad9d"></div>
</div>
<div class="a" style="left:238px;top:246px;width:748px;height:1px;background:#fff"></div>
<div class="a" style="left:267px;top:247px;width:1px;height:23px;background:#b4ad9d"></div>
<div class="a" style="left:268px;top:247px;width:1px;height:23px;background:#fff"></div>
<div class="a" style="left:358px;top:247px;width:1px;height:23px;background:#b4ad9d"></div>
<div class="a" style="left:359px;top:247px;width:1px;height:23px;background:#fff"></div>
<div class="a" style="left:447px;top:247px;width:1px;height:23px;background:#b4ad9d"></div>
<div class="a" style="left:448px;top:247px;width:1px;height:23px;background:#fff"></div>
<div class="a" style="left:526px;top:247px;width:1px;height:23px;background:#b4ad9d"></div>
<div class="a" style="left:527px;top:247px;width:1px;height:23px;background:#fff"></div>
<div class="a" style="left:585px;top:247px;width:1px;height:23px;background:#b4ad9d"></div>
<div class="a" style="left:586px;top:247px;width:1px;height:23px;background:#fff"></div>
<div class="a" style="left:661px;top:247px;width:1px;height:23px;background:#b4ad9d"></div>
<div class="a" style="left:662px;top:247px;width:1px;height:23px;background:#fff"></div>
<div class="a" style="left:730px;top:247px;width:1px;height:23px;background:#b4ad9d"></div>
<div class="a" style="left:731px;top:247px;width:1px;height:23px;background:#fff"></div>
<div class="a" style="left:793px;top:247px;width:1px;height:23px;background:#b4ad9d"></div>
<div class="a" style="left:794px;top:247px;width:1px;height:23px;background:#fff"></div>
<div class="a" style="left:861px;top:247px;width:1px;height:23px;background:#b4ad9d"></div>
<div class="a" style="left:862px;top:247px;width:1px;height:23px;background:#fff"></div>
<div class="a" style="left:924px;top:247px;width:1px;height:23px;background:#b4ad9d"></div>
<div class="a" style="left:925px;top:247px;width:1px;height:23px;background:#fff"></div>
<div class="a" style="left:986px;top:247px;width:1px;height:23px;background:#b4ad9d"></div>
<div class="a" style="left:237px;top:620px;width:750px;height:1px;background:#b4ad9d"></div>
<div class="a" style="left:238px;top:621px;width:749px;height:21px;background:#e0f8f8"></div>
<div class="a" style="left:267px;top:621px;width:1px;height:21px;background:#b4ad9d"></div>
<div class="t" style="left:243px;top:626px;font-size:11px;-webkit-text-stroke:0;font-family:'Liberation Sans',sans-serif">280</div>
<div class="a" style="left:270px;top:623px;width:87px;height:17px;border-top:1px solid #b8b2a4;border-left:1px solid #b8b2a4;background:#e4f8f8"></div>
<div class="t" style="left:274px;top:626px">共有280条记录</div>
<div class="a check" style="left:987px;top:246px;width:17px;height:396px"></div>
<div class="a" style="left:986px;top:245px;width:18px;height:1px;background:#b4ad9d"></div>
<div class="sbtn" style="left:987px;top:246px;width:17px;height:17px"></div>
<div class="sbtn" style="left:987px;top:263px;width:17px;height:22px"></div>
<div class="sbtn" style="left:987px;top:626px;width:17px;height:17px"></div>
<div class="a" style="left:237px;top:642px;width:750px;height:1px;background:#b4ad9d"></div>
<div class="a check" style="left:238px;top:643px;width:749px;height:17px"></div>
<div class="sbtn" style="left:238px;top:643px;width:17px;height:17px"></div>
<div class="sbtn" style="left:255px;top:643px;width:222px;height:17px"></div>
<div class="sbtn" style="left:970px;top:643px;width:17px;height:17px"></div>
<div class="a" style="left:987px;top:643px;width:17px;height:17px;background:#ece9d8"></div>
<svg class="a" style="left:0;top:0;pointer-events:none" width="1013" height="673">
<path d="M991.5 258.5 h8 l-4 -4z" fill="#000"/>
<path d="M992 633 h7.5 l-3.75 4.5z" fill="#000"/>
<path d="M248.2 647.8 v7.4 l-4.2 -3.7z" fill="#000"/>
<path d="M976 647.9 v7.2 l4.4 -3.6z" fill="#000"/>
</svg>
</body></html>
